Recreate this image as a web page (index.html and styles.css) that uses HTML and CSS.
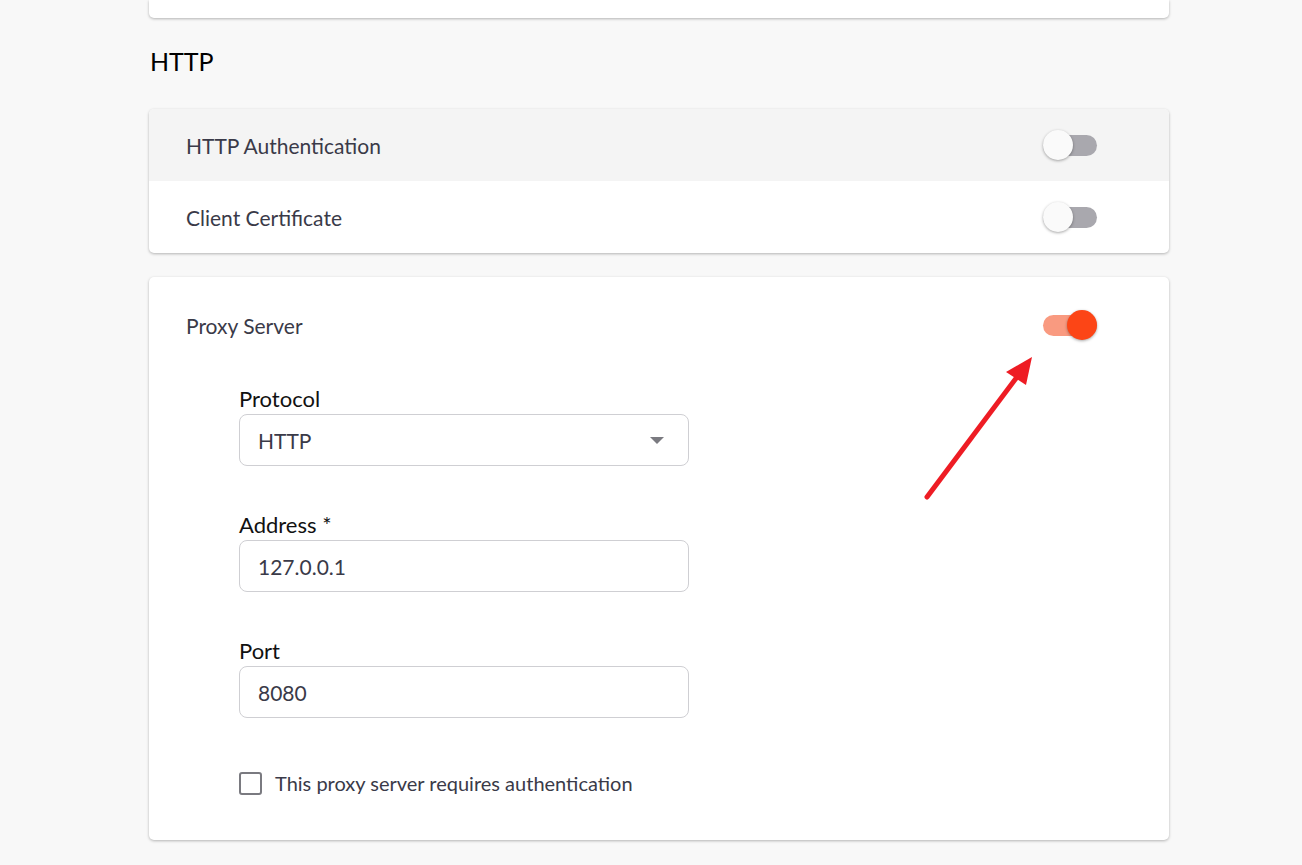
FILE: index.html
```html
<!DOCTYPE html>
<html>
<head>
<meta charset="utf-8">
<link rel="stylesheet" href="styles.css">
</head>
<body>
<div class="page">
  <div class="card card-top"></div>
  <h2 class="section-title">HTTP</h2>
  <div class="card list-card">
    <div class="row row-hover">
      <span class="row-label">HTTP Authentication</span>
      <span class="toggle"><span class="track"></span><span class="thumb"></span></span>
    </div>
    <div class="row">
      <span class="row-label">Client Certificate</span>
      <span class="toggle"><span class="track"></span><span class="thumb"></span></span>
    </div>
  </div>
  <div class="card proxy-card">
    <div class="row proxy-row">
      <span class="row-label">Proxy Server</span>
      <span class="toggle on"><span class="track"></span><span class="thumb"></span></span>
    </div>
    <div class="form">
      <div class="field">
        <label class="field-label">Protocol</label>
        <div class="input select">
          <span>HTTP</span>
          <svg class="caret" width="14" height="7" viewBox="0 0 14 7"><path d="M0 0 L14 0 L7 7 Z" fill="#7a7a80"/></svg>
        </div>
      </div>
      <div class="field">
        <label class="field-label">Address *</label>
        <div class="input"><span>127.0.0.1</span></div>
      </div>
      <div class="field">
        <label class="field-label">Port</label>
        <div class="input"><span>8080</span></div>
      </div>
      <div class="check-row">
        <span class="checkbox"></span>
        <span class="check-label">This proxy server requires authentication</span>
      </div>
    </div>
    <svg class="arrow" width="130" height="160" viewBox="0 0 130 160">
      <line x1="7" y1="142" x2="100" y2="18" stroke="#ee1c24" stroke-width="5" stroke-linecap="round"/>
      <path d="M112 2 L86 17 L106 30 Z" fill="#ee1c24"/>
    </svg>
  </div>
</div>
</body>
</html>
```
FILE: styles.css
```css
html, body {
  margin: 0;
  padding: 0;
  background: #f8f8f8;
  font-family: "Source Sans Pro", Lato, "Liberation Sans", sans-serif;
}
.page {
  width: 1020px;
  margin-left: 149px;
  padding-bottom: 30px;
}
.card {
  background: #fff;
  border-radius: 5px;
  box-shadow: 0 1px 3px rgba(0,0,0,0.28);
}
.card-top {
  height: 18px;
  border-radius: 0 0 5px 5px;
}
.section-title {
  margin: 0;
  padding: 30px 0 0 1px;
  height: 60px;
  box-sizing: border-box;
  font-size: 25px;
  font-weight: 400;
  color: #000;
  line-height: 26px;
}
.list-card {
  margin-top: 31px;
  overflow: hidden;
}
.row {
  height: 72px;
  display: flex;
  align-items: center;
  justify-content: space-between;
  padding: 0 72px 0 37px;
}
.row-hover {
  background: #f4f4f4;
}
.row-label {
  font-size: 21px;
  color: #3a3a48;
}
.toggle {
  position: relative;
  width: 54px;
  height: 30px;
  display: inline-block;
}
.track {
  position: absolute;
  left: 0;
  top: 5px;
  width: 54px;
  height: 21px;
  border-radius: 11px;
  background: #a9a8ae;
}
.thumb {
  position: absolute;
  left: 0;
  top: 0;
  width: 30px;
  height: 30px;
  border-radius: 50%;
  background: #fafafa;
  box-shadow: 0 1px 3px rgba(0,0,0,0.35);
}
.toggle.on .track {
  background: #f99a80;
}
.toggle.on .thumb {
  left: 24px;
  background: #fc4516;
}
.proxy-card {
  margin-top: 24px;
  position: relative;
  padding-bottom: 45px;
}
.proxy-row {
  height: 96px;
}
.form {
  padding: 11px 0 0 90px;
}
.field {
  width: 450px;
  margin-bottom: 44px;
}
.field-label {
  display: block;
  font-size: 22px;
  color: #111;
  height: 30px;
  line-height: 30px;
}
.input {
  height: 52px;
  box-sizing: border-box;
  border: 1px solid #cfcfd3;
  border-radius: 8px;
  display: flex;
  align-items: center;
  justify-content: space-between;
  padding: 0 24px 0 18px;
  font-size: 21px;
  color: #3a3a48;
}
.caret {
  display: block;
}
.check-row {
  display: flex;
  align-items: center;
  gap: 13px;
  margin-top: 53px;
}
.checkbox {
  width: 19px;
  height: 19px;
  border: 2px solid #7a7a80;
  border-radius: 3px;
}
.check-label {
  font-size: 20px;
  color: #3a3a48;
}
.arrow {
  position: absolute;
  left: 771px;
  top: 78px;
}
```
